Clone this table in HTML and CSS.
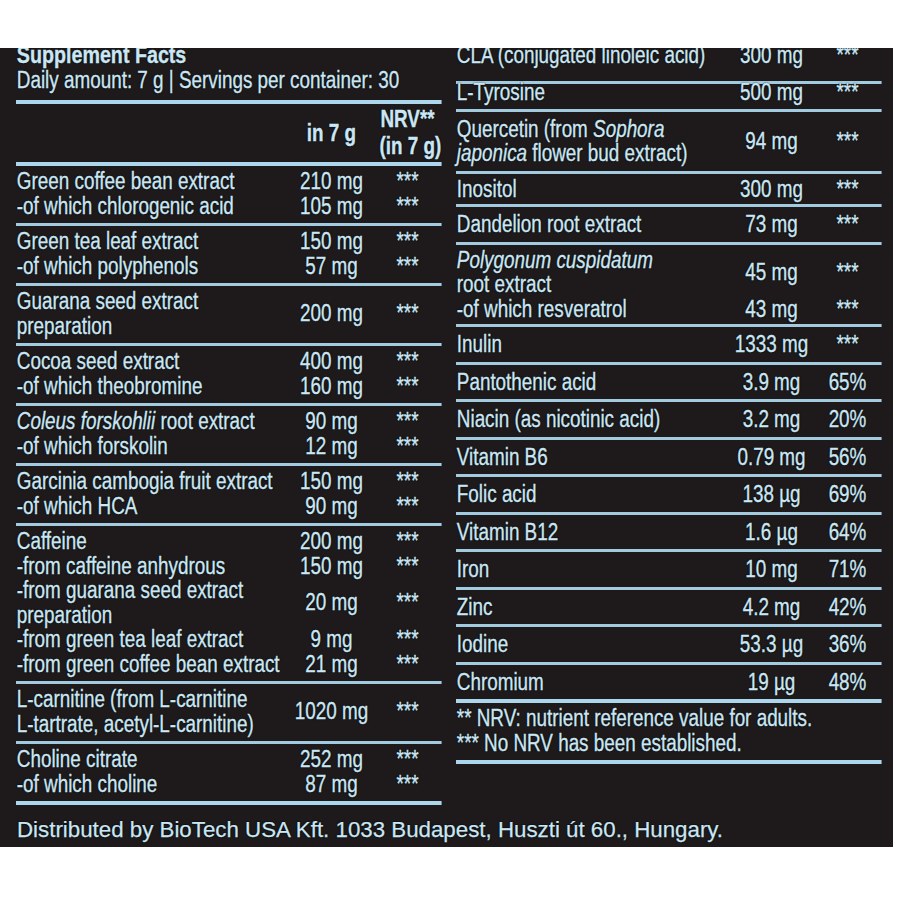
FILE: index.html
```html
<!DOCTYPE html>
<html lang="en">
<head>
<meta charset="utf-8">
<title>Supplement Facts</title>
<link rel="stylesheet" href="styles.css">
</head>
<body>
<div class="panel">
  <div class="cols">
    <section class="col col-left">
      <div class="col-inner">
        <h1 class="title">Supplement Facts</h1>
        <p class="daily">Daily amount: 7 g | Servings per container: 30</p>
        <div class="row head">
          <span class="name"></span><span class="amt">in 7 g</span><span class="nrv">NRV**<br>(in 7 g)</span>
        </div>
        <div class="group">
          <div class="row"><span class="name">Green coffee bean extract</span><span class="amt">210 mg</span><span class="nrv">***</span></div>
          <div class="row"><span class="name">-of which chlorogenic acid</span><span class="amt">105 mg</span><span class="nrv">***</span></div>
        </div>
        <div class="group">
          <div class="row"><span class="name">Green tea leaf extract</span><span class="amt">150 mg</span><span class="nrv">***</span></div>
          <div class="row"><span class="name">-of which polyphenols</span><span class="amt">57 mg</span><span class="nrv">***</span></div>
        </div>
        <div class="group">
          <div class="row"><span class="name">Guarana seed extract<br>preparation</span><span class="amt">200 mg</span><span class="nrv">***</span></div>
        </div>
        <div class="group">
          <div class="row"><span class="name">Cocoa seed extract</span><span class="amt">400 mg</span><span class="nrv">***</span></div>
          <div class="row"><span class="name">-of which theobromine</span><span class="amt">160 mg</span><span class="nrv">***</span></div>
        </div>
        <div class="group">
          <div class="row"><span class="name"><i>Coleus forskohlii</i> root extract</span><span class="amt">90 mg</span><span class="nrv">***</span></div>
          <div class="row"><span class="name">-of which forskolin</span><span class="amt">12 mg</span><span class="nrv">***</span></div>
        </div>
        <div class="group">
          <div class="row"><span class="name">Garcinia cambogia fruit extract</span><span class="amt">150 mg</span><span class="nrv">***</span></div>
          <div class="row"><span class="name">-of which HCA</span><span class="amt">90 mg</span><span class="nrv">***</span></div>
        </div>
        <div class="group">
          <div class="row"><span class="name">Caffeine</span><span class="amt">200 mg</span><span class="nrv">***</span></div>
          <div class="row"><span class="name">-from caffeine anhydrous</span><span class="amt">150 mg</span><span class="nrv">***</span></div>
          <div class="row"><span class="name">-from guarana seed extract<br>preparation</span><span class="amt">20 mg</span><span class="nrv">***</span></div>
          <div class="row"><span class="name">-from green tea leaf extract</span><span class="amt">9 mg</span><span class="nrv">***</span></div>
          <div class="row"><span class="name">-from green coffee bean extract</span><span class="amt">21 mg</span><span class="nrv">***</span></div>
        </div>
        <div class="group">
          <div class="row"><span class="name">L-carnitine (from L-carnitine<br>L-tartrate, acetyl-L-carnitine)</span><span class="amt">1020 mg</span><span class="nrv">***</span></div>
        </div>
        <div class="group group-end">
          <div class="row"><span class="name">Choline citrate</span><span class="amt">252 mg</span><span class="nrv">***</span></div>
          <div class="row"><span class="name">-of which choline</span><span class="amt">87 mg</span><span class="nrv">***</span></div>
        </div>
      </div>
    </section>

    <section class="col col-right">
      <div class="col-inner">
        <div class="item item-first">
          <div class="row"><span class="name">CLA (conjugated linoleic acid)</span><span class="amt">300 mg</span><span class="nrv">***</span></div>
        </div>
        <div class="item item-tight">
          <div class="row"><span class="name">L-Tyrosine</span><span class="amt">500 mg</span><span class="nrv">***</span></div>
        </div>
        <div class="item item-two">
          <div class="row"><span class="name">Quercetin (from <i>Sophora</i><br><i>japonica</i> flower bud extract)</span><span class="amt">94 mg</span><span class="nrv">***</span></div>
        </div>
        <div class="item item-snug">
          <div class="row"><span class="name">Inositol</span><span class="amt">300 mg</span><span class="nrv">***</span></div>
        </div>
        <div class="item item-two">
          <div class="row"><span class="name">Dandelion root extract</span><span class="amt">73 mg</span><span class="nrv">***</span></div>
        </div>
        <div class="item item-snug">
          <div class="row"><span class="name"><i>Polygonum cuspidatum</i><br>root extract</span><span class="amt">45 mg</span><span class="nrv">***</span></div>
          <div class="row"><span class="name">-of which resveratrol</span><span class="amt">43 mg</span><span class="nrv">***</span></div>
        </div>
        <div class="item">
          <div class="row"><span class="name">Inulin</span><span class="amt">1333 mg</span><span class="nrv">***</span></div>
        </div>
        <div class="item">
          <div class="row"><span class="name">Pantothenic acid</span><span class="amt">3.9 mg</span><span class="nrv">65%</span></div>
        </div>
        <div class="item">
          <div class="row"><span class="name">Niacin (as nicotinic acid)</span><span class="amt">3.2 mg</span><span class="nrv">20%</span></div>
        </div>
        <div class="item">
          <div class="row"><span class="name">Vitamin B6</span><span class="amt">0.79 mg</span><span class="nrv">56%</span></div>
        </div>
        <div class="item">
          <div class="row"><span class="name">Folic acid</span><span class="amt">138 µg</span><span class="nrv">69%</span></div>
        </div>
        <div class="item">
          <div class="row"><span class="name">Vitamin B12</span><span class="amt">1.6 µg</span><span class="nrv">64%</span></div>
        </div>
        <div class="item">
          <div class="row"><span class="name">Iron</span><span class="amt">10 mg</span><span class="nrv">71%</span></div>
        </div>
        <div class="item">
          <div class="row"><span class="name">Zinc</span><span class="amt">4.2 mg</span><span class="nrv">42%</span></div>
        </div>
        <div class="item">
          <div class="row"><span class="name">Iodine</span><span class="amt">53.3 µg</span><span class="nrv">36%</span></div>
        </div>
        <div class="item item-end">
          <div class="row"><span class="name">Chromium</span><span class="amt">19 µg</span><span class="nrv">48%</span></div>
        </div>
        <div class="notes">
          <p class="note">** NRV: nutrient reference value for adults.</p>
          <p class="note">*** No NRV has been established.</p>
        </div>
      </div>
    </section>
  </div>
  <p class="dist">Distributed by BioTech USA Kft. 1033 Budapest, Huszti út 60., Hungary.</p>
</div>
</body>
</html>
```

FILE: styles.css
```css
* {
  box-sizing: border-box;
}

body {
  margin: 0;
  background: #ffffff;
}

.panel {
  width: 893px;
  height: 799px;
  margin-top: 48px;
  padding: 0 12px 0 16px;
  background: #1e1a1b;
  overflow: hidden;
  color: #cbe7f5;
  font-family: "Liberation Sans", Arial, sans-serif;
  font-size: 23px;
  -webkit-text-stroke: 0.35px #cbe7f5;
  text-shadow: 0 0 2px #000, 0 0 1px #000;
}

.cols {
  display: flex;
  gap: 14px;
  align-items: flex-start;
}

.col {
  flex: 1 1 0;
  min-width: 0;
}

/* condensed type: lay out wide, then squeeze horizontally */
.col-inner {
  width: 121.95%;
  transform: scaleX(0.82);
  transform-origin: 0 0;
}

.col-left {
  margin-top: -6px;
}

.col-right {
  margin-top: -10px;
}

.title {
  margin: 0;
  padding-left: 1px;
  font-size: 24px;
  line-height: 26px;
  font-weight: bold;
}

.daily {
  margin: 0;
  padding: 0 0 7px 1px;
  line-height: 25px;
  white-space: nowrap;
  border-bottom: 4px solid #abd6ec;
}

.row {
  display: grid;
  grid-template-columns: minmax(0, 1fr) 97.5px 68.3px;
  column-gap: 9.8px;
  padding-right: 7.3px;
  align-items: center;
  line-height: 24.5px;
}

.name {
  padding-left: 1px;
  white-space: nowrap;
}

.amt,
.nrv {
  text-align: center;
  white-space: nowrap;
}

.head {
  font-weight: bold;
  line-height: 27px;
  padding-top: 2px;
  padding-bottom: 2px;
  border-bottom: 4px solid #abd6ec;
}

.group {
  padding: 3px 0 5px;
  border-bottom: 3px solid #a2cbe0;
}

.group-end {
  border-bottom: 4px solid #abd6ec;
}

.item {
  padding: 5px 0 5px;
  border-bottom: 3px solid #a2cbe0;
}

.item-first {
  padding: 5px 0 13px;
}

.item-tight {
  padding: 0 0 9px;
}

.item-tight .row {
  line-height: 16px;
}

.item-two {
  padding: 5px 0 5px;
}

.item-snug {
  padding: 3px 0 3px;
}

.item-end {
  border-bottom: 4px solid #abd6ec;
}

.notes {
  padding: 3px 0 5px 1px;
  border-bottom: 4px solid #abd6ec;
}

.note {
  margin: 0;
  line-height: 24.5px;
  white-space: nowrap;
}

.dist {
  margin: 12px 0 0 1px;
  font-size: 22.3px;
  line-height: 26px;
  white-space: nowrap;
  -webkit-text-stroke: 0.25px #cbe7f5;
}
```
